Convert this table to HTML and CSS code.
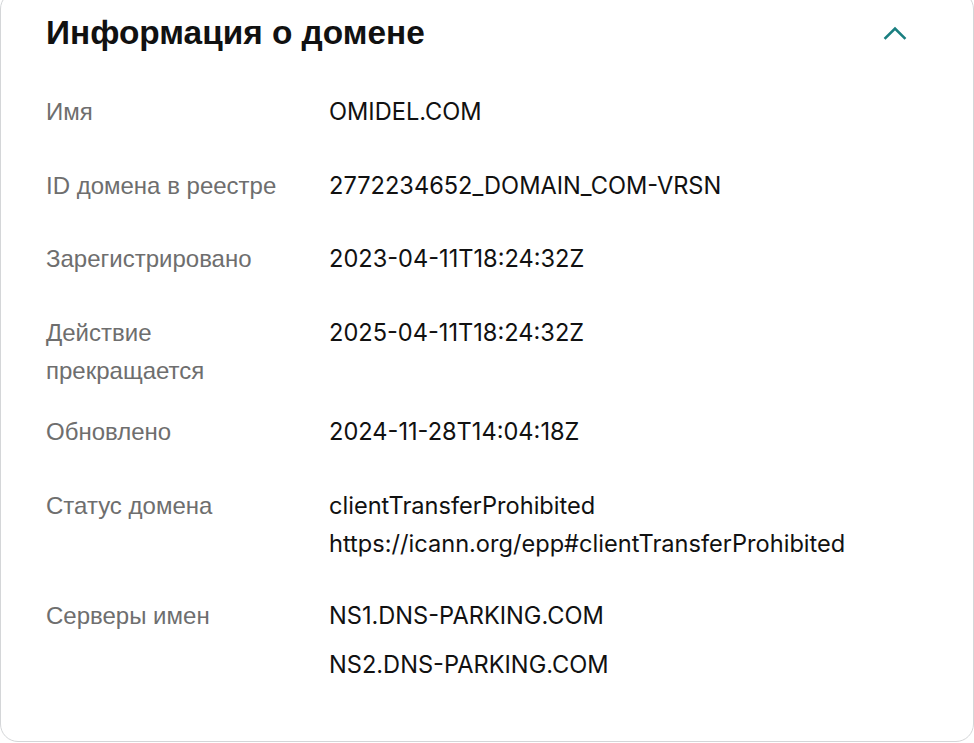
FILE: index.html
```html
<!DOCTYPE html>
<html lang="ru">
<head>
<meta charset="utf-8">
<link rel="stylesheet" href="styles.css">
</head>
<body>
<section class="card">
  <header class="card-head">
    <h2 class="title">Информация о домене</h2>
    <svg class="chevron" width="24" height="14" viewBox="0 0 24 14" aria-hidden="true">
      <path d="M2.5 12 L12 2.5 L21.5 12" fill="none" stroke="#1a7f80" stroke-width="2.6" stroke-linecap="square"/>
    </svg>
  </header>
  <dl class="info">
    <div class="row">
      <dt>Имя</dt>
      <dd>OMIDEL.COM</dd>
    </div>
    <div class="row">
      <dt>ID домена в реестре</dt>
      <dd>2772234652_DOMAIN_COM-VRSN</dd>
    </div>
    <div class="row">
      <dt>Зарегистрировано</dt>
      <dd>2023-04-11T18:24:32Z</dd>
    </div>
    <div class="row">
      <dt>Действие<br>прекращается</dt>
      <dd>2025-04-11T18:24:32Z</dd>
    </div>
    <div class="row">
      <dt>Обновлено</dt>
      <dd>2024-11-28T14:04:18Z</dd>
    </div>
    <div class="row row-status">
      <dt>Статус домена</dt>
      <dd>
        <div class="line">clientTransferProhibited</div>
        <div class="line">https://icann.org/epp#clientTransferProhibited</div>
      </dd>
    </div>
    <div class="row row-ns">
      <dt>Серверы имен</dt>
      <dd>
        <div class="ns">NS1.DNS-PARKING.COM</div>
        <div class="ns">NS2.DNS-PARKING.COM</div>
      </dd>
    </div>
  </dl>
</section>
</body>
</html>
```
FILE: styles.css
```css
html, body {
  margin: 0;
  padding: 0;
  background: #ffffff;
}
body {
  width: 974px;
  height: 743px;
  overflow: hidden;
}
.card {
  box-sizing: border-box;
  width: 974px;
  height: 751px;
  margin-top: -9px;
  border: 1.5px solid #d4d6d8;
  border-radius: 18px;
  background: #fff;
  padding: 20px 0 0 45px;
}
.card-head {
  display: flex;
  align-items: center;
  justify-content: space-between;
  padding-right: 66px;
  height: 42px;
}
.title {
  margin: 0;
  font-family: "Liberation Sans", Arial, sans-serif;
  font-weight: 700;
  font-size: 33.4px;
  line-height: 42px;
  color: #111;
}
.chevron {
  display: block;
  margin-top: -1px;
}
.info {
  margin: 0;
  padding-top: 39px;
}
.row {
  display: grid;
  grid-template-columns: 283px 1fr;
  min-height: 50px;
  margin-bottom: 23.5px;
}
dt {
  font-family: "Liberation Sans", Arial, sans-serif;
  font-size: 24px;
  line-height: 38px;
  color: #6e6e6e;
}
dd {
  margin: 0;
  font-family: "Inter", "Liberation Sans", sans-serif;
  font-size: 23.6px;
  line-height: 38px;
  color: #111;
}
.row-status {
  margin-bottom: 34px;
}
.ns + .ns {
  margin-top: 11px;
}
```
